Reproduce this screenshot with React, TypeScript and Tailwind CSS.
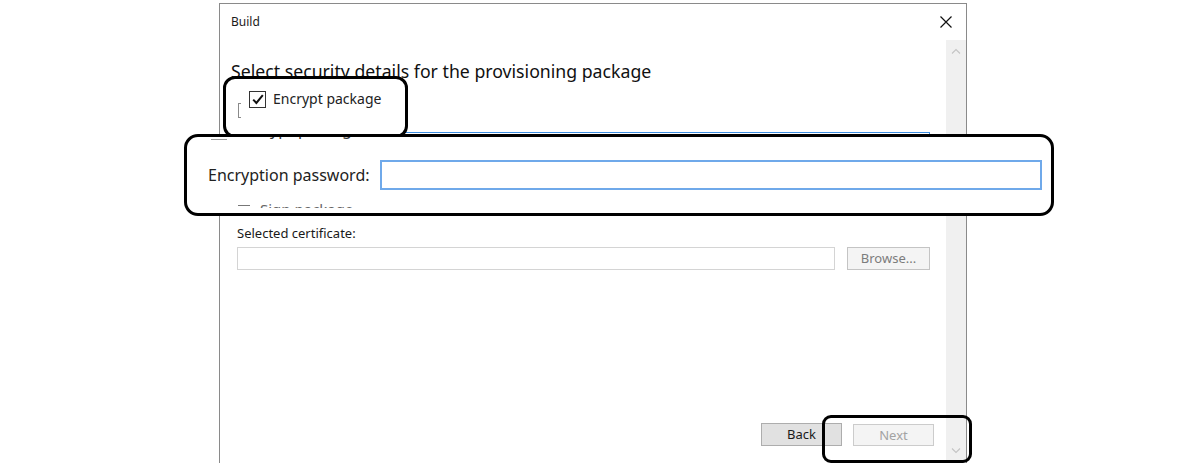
import { ReactNode } from "react";

function Chevron({ down }: { down?: boolean }) {
  return (
    <svg width="10" height="6" viewBox="0 0 10 6" className={down ? "rotate-180" : ""}>
      <path d="M1 5.5 L5 1.5 L9 5.5" fill="none" stroke="#c4c4c4" strokeWidth="1.1" />
    </svg>
  );
}

function Callout({ className, children }: { className: string; children?: ReactNode }) {
  return <div className={"absolute border-[3px] border-black " + className}>{children}</div>;
}

export default function App() {
  return (
    <div className="relative w-[1185px] h-[476px] bg-white overflow-hidden font-['Noto_Sans',sans-serif] text-[#1a1a1a]">
      {/* dialog window */}
      <div className="ml-[219px] mt-[3px] w-[748px] h-[460px] border-x border-t border-[#8a8a8a] flex flex-col">
        <div className="h-[36px] flex items-center justify-between pl-[11px] pr-[14px] shrink-0">
          <span className="text-[12px]">Build</span>
          <svg width="12" height="12" viewBox="0 0 12 12">
            <path d="M0.5 0.5 L11.5 11.5 M11.5 0.5 L0.5 11.5" stroke="#111" strokeWidth="1.2" />
          </svg>
        </div>
        <div className="flex flex-1 min-h-0">
          <div className="flex-1 pl-[11px] flex flex-col">
            <h1 className="mt-[19px] text-[17.7px] leading-[24px] font-normal text-[#111] whitespace-nowrap">
              Select security details for the provisioning package
            </h1>
            <div className="mt-[49px] ml-[149px] w-[550px] h-[22px] border border-[#3c8de0]" />
            <p className="mt-[71px] ml-[6px] text-[13px] leading-[16px]">Selected certificate:</p>
            <div className="mt-[6px] ml-[6px] flex">
              <div className="w-[598px] h-[23px] border border-[#d4d4d4] bg-white" />
              <button className="ml-[12px] w-[83px] h-[23px] border border-[#c4c4c4] bg-[#f4f4f4] text-[13px] text-[#7c7c7c] leading-none">
                Browse...
              </button>
            </div>
            <div className="flex-1" />
            <div className="flex justify-end gap-[11px] pr-[12px] pb-[17px] items-end">
              <button className="w-[81px] h-[23px] border border-[#adadad] bg-[#e1e1e1] text-[13px] leading-none">
                Back
              </button>
              <button className="w-[81px] h-[22px] border border-[#cccccc] bg-[#f4f4f4] text-[13px] text-[#a3a3a3] leading-none">
                Next
              </button>
            </div>
          </div>
          <div className="w-[20px] bg-[#f0f0f0] flex flex-col items-center justify-between pt-[8px] pb-[9px]">
            <Chevron />
            <Chevron down />
          </div>
        </div>
      </div>

      {/* callout: encrypt package */}
      <Callout className="left-[223px] top-[76px] w-[185px] h-[62px] rounded-[12px] bg-white">
        <div className="flex items-start pl-[12px] pt-[10px]">
          <div className="mt-[14px] w-[3px] h-[15px] border-l border-y border-[#8a8a8a]" />
          <div className="ml-[8px] flex items-center gap-[7px]">
            <div className="w-[17px] h-[17px] border border-[#333] bg-white flex items-center justify-center">
              <svg width="12" height="11" viewBox="0 0 12 11">
                <path d="M1.2 5.6 L4.4 9 L10.8 1.2" fill="none" stroke="#111" strokeWidth="2" />
              </svg>
            </div>
            <span className="text-[14px] leading-[20px] text-[#222]">Encrypt package</span>
          </div>
        </div>
      </Callout>

      {/* callout: encryption password */}
      <Callout className="left-[184px] top-[134px] w-[870px] h-[82px] rounded-[14px] bg-white overflow-hidden">
        <div className="relative h-[6px] overflow-hidden">
          <div className="absolute left-[24px] top-[2px] w-[16px] h-px bg-[#9a9a9a]" />
          <span className="absolute left-[50px] top-[-18px] text-[16px] leading-[20px] text-[#333]">Encrypt package</span>
        </div>
        <div className="mt-[17px] flex items-center">
          <span className="ml-[21px] w-[172px] text-[16px] leading-[22px] text-[#222]">Encryption password:</span>
          <div className="w-[662px] h-[30px] border-2 border-[#6fa9ea]" />
        </div>
        <div className="mt-[12px] h-[6px] overflow-hidden flex items-start">
          <div className="ml-[51px] mt-[3px] w-[12px] h-px bg-[#777]" />
          <span className="ml-[10px] mt-[-3px] text-[15px] leading-[20px] text-[#666]">Sign package</span>
        </div>
      </Callout>

      {/* callout: next button */}
      <Callout className="left-[822px] top-[415px] w-[150px] h-[48px] rounded-[9px]" />
    </div>
  );
}
